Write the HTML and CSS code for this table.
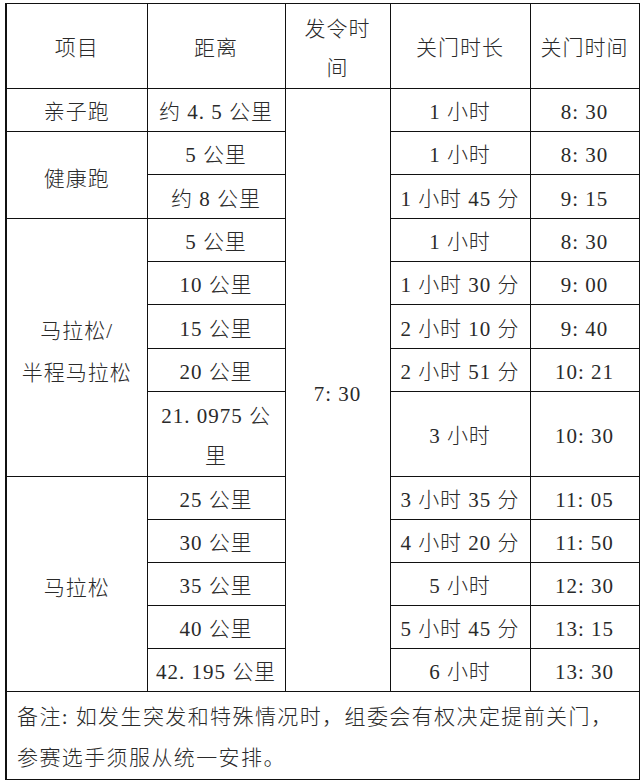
FILE: index.html
```html
<!DOCTYPE html>
<html lang="zh-CN">
<head>
<meta charset="utf-8">
<title>关门时间</title>
<link rel="stylesheet" href="styles.css">
</head>
<body>
<table class="sched">
  <colgroup>
    <col class="c1"><col class="c2"><col class="c3"><col class="c4"><col class="c5">
  </colgroup>
  <tr class="head">
    <td>项目</td>
    <td>距离</td>
    <td>发令时<br>间</td>
    <td>关门时长</td>
    <td>关门时间</td>
  </tr>
  <tr>
    <td>亲子跑</td>
    <td>约 4. 5 公里</td>
    <td class="span" rowspan="13">7: 30</td>
    <td>1 小时</td>
    <td>8: 30</td>
  </tr>
  <tr>
    <td class="span" rowspan="2">健康跑</td>
    <td>5 公里</td>
    <td>1 小时</td>
    <td>8: 30</td>
  </tr>
  <tr class="tall">
    <td>约 8 公里</td>
    <td>1 小时 45 分</td>
    <td>9: 15</td>
  </tr>
  <tr>
    <td class="span" rowspan="5">马拉松/<br>半程马拉松</td>
    <td>5 公里</td>
    <td>1 小时</td>
    <td>8: 30</td>
  </tr>
  <tr>
    <td>10 公里</td>
    <td>1 小时 30 分</td>
    <td>9: 00</td>
  </tr>
  <tr class="tall">
    <td>15 公里</td>
    <td>2 小时 10 分</td>
    <td>9: 40</td>
  </tr>
  <tr>
    <td>20 公里</td>
    <td>2 小时 51 分</td>
    <td>10: 21</td>
  </tr>
  <tr class="dbl">
    <td class="wrap">21. 0975 公<br>里</td>
    <td>3 小时</td>
    <td>10: 30</td>
  </tr>
  <tr>
    <td class="span" rowspan="5">马拉松</td>
    <td>25 公里</td>
    <td>3 小时 35 分</td>
    <td>11: 05</td>
  </tr>
  <tr>
    <td>30 公里</td>
    <td>4 小时 20 分</td>
    <td>11: 50</td>
  </tr>
  <tr>
    <td>35 公里</td>
    <td>5 小时</td>
    <td>12: 30</td>
  </tr>
  <tr>
    <td>40 公里</td>
    <td>5 小时 45 分</td>
    <td>13: 15</td>
  </tr>
  <tr>
    <td>42. 195 公里</td>
    <td>6 小时</td>
    <td>13: 30</td>
  </tr>
  <tr class="note">
    <td colspan="5">备注: 如发生突发和特殊情况时，组委会有权决定提前关门，<br>参赛选手须服从统一安排。</td>
  </tr>
</table>
</body>
</html>
```

FILE: styles.css
```css
html, body {
  margin: 0;
  padding: 0;
  background: #ffffff;
}

.sched {
  margin: 3px 0 0 5px;
  border-collapse: collapse;
  table-layout: fixed;
  width: 633px;
  font-family: "Liberation Serif", "Noto Sans CJK SC", serif;
  font-size: 21px;
  font-weight: 300;
  color: #2a2a2a;
  letter-spacing: 1px;
  border-left: 2px solid #111;
}

.c1 { width: 141px; }
.c2 { width: 138px; }
.c3 { width: 105px; }
.c4 { width: 140px; }
.c5 { width: 109px; }

.sched td {
  border: 1px solid #111;
  padding: 5px 0 0 0;
  text-align: center;
  vertical-align: middle;
  line-height: 37px;
  height: 37px;
  white-space: nowrap;
}

.sched .tall td {
  height: 38px;
}

.sched .head td {
  height: 79px;
  line-height: 39px;
  padding-top: 5px;
}

.sched .dbl td {
  height: 80px;
  padding-top: 4px;
}

.sched .dbl td.wrap {
  line-height: 40px;
}

.sched td.span {
  line-height: 42px;
  padding-top: 8px;
}

.sched .note td {
  text-align: left;
  padding: 5px 0 0 10px;
  line-height: 41px;
  height: 80px;
  letter-spacing: 1.4px;
}
```
